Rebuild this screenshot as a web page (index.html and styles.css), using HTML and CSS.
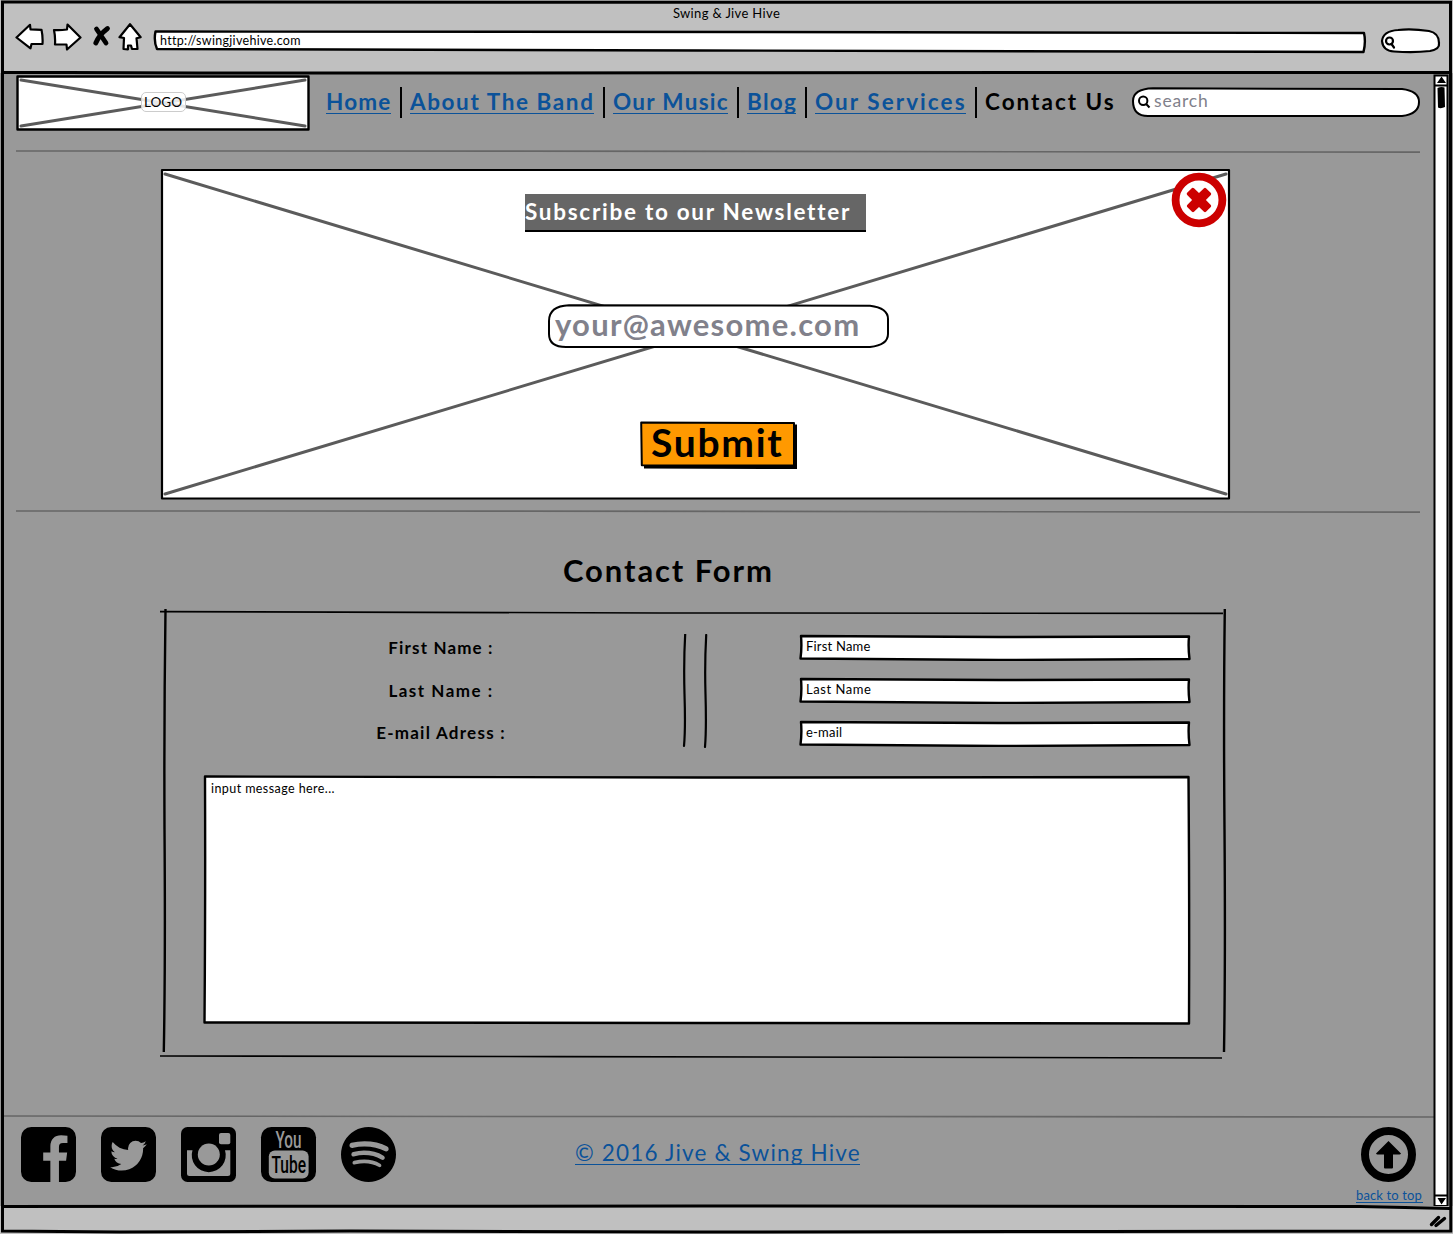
FILE: index.html
```html
<!DOCTYPE html>
<html lang="en">
<head>
<meta charset="utf-8">
<title>Swing &amp; Jive Hive</title>
<link rel="stylesheet" href="styles.css">
</head>
<body>
<div class="window">
  <header class="chrome">
    <div class="title"><span class="t-title">Swing &amp; Jive Hive</span></div>
    <div class="toolbar">
      <svg class="tool back" viewBox="15 22 30 30"><path d="M16.5 37.5L30 24.8 30.5 29.3 41.5 29.8Q43 37 42.5 44L31.5 44 30.5 48.3Z"/></svg>
      <svg class="tool forward" viewBox="52 22 30 30"><path d="M54 30Q60 30.500 67 29.500L67.500 24.500 80.500 37.500 67 49.500 66.500 44.500 55 44.500Q55.500 37 54 30Z"/></svg>
      <svg class="tool stop" viewBox="92 22 20 30"><path d="M96.500 29L106 43M107.500 28.500Q99 35 95.800 43" /></svg>
      <svg class="tool home" viewBox="118 22 24 30"><path d="M130 24.200L119.500 37.200 124 38 123.500 49 128 49.300 128 45.500 131 45.500 132 49 137.500 49 136.500 38.200 140.700 37.200Z"/></svg>
      <div class="url">
        <svg class="sketch" viewBox="153 22 1214 36"><path d="M155.500 31.500L750 32 1364 33Q1366 42 1363.500 52L700 50.500 157 49Q153.500 41 155.500 31.500Z"/></svg>
        <span class="t-url">http://swingjivehive.com</span>
      </div>
      <svg class="tool find" viewBox="1380 22 62 36"><path d="M1382 41Q1383 31 1398 30 1412 28.500 1429 31 1439 33 1439 43 1440 49 1430 51 1414 53 1394 51.500 1383 51 1382 41Z"/><circle cx="1389.500" cy="41" r="3.500"/><path d="M1391.500 44L1394 47.500"/></svg>
    </div>
  </header>

  <div class="viewport">
    <main class="page">
      <div class="masthead">
        <div class="logo">
          <svg class="sketch" viewBox="0 0 294 56"><rect x="1.500" y="1.500" width="291" height="53"/><path class="cross" d="M5 5L289 51M5 51L289 5"/></svg>
          <span class="logo-tag">LOGO</span>
        </div>
        <nav class="menu">
          <a class="m-home">Home</a><i></i>
          <a class="m-about">About The Band</a><i></i>
          <a class="m-music">Our Music</a><i></i>
          <a class="m-blog">Blog</a><i></i>
          <a class="m-services">Our Services</a><i></i>
          <span class="m-contact">Contact Us</span>
        </nav>
        <div class="search">
          <svg class="sketch" viewBox="0 0 288 30"><path d="M1 14Q1 2 21 1.300L270 2Q287 4 287 15 287 27 270 29L16 29Q1 29 1 14Z"/><circle cx="11.200" cy="13.800" r="4.200"/><path d="M14.200 17L17.500 20.500"/></svg>
          <span class="t-search">search</span>
        </div>
      </div>
      <svg class="rule inset" viewBox="0 0 1404 3"><path d="M0 1L500 1.100 1000 1.700 1404 2.100"/></svg>

      <section class="newsletter">
        <svg class="sketch" viewBox="0 0 1071 332"><rect x="2" y="2" width="1067" height="328.500"/><path class="cross" d="M5 6L1066 326M5 326L1066 6"/></svg>
        <svg class="close" viewBox="0 0 56 56"><circle cx="28" cy="28" r="23.400"/><path d="M15.900 21L21 15.900Q22 15.400 23 16.200L28 21 33 16.200Q34 15.400 35 16.200L39.900 21Q40.600 22 39.800 23L34.900 28 39.800 33Q40.600 34 39.800 35L35 39.800Q34 40.600 33 39.800L28 34.900 23 39.800Q22 40.600 21 39.800L16.200 35Q15.400 34 16.200 33L21.100 28 16.200 23Q15.400 22 15.900 21Z"/></svg>
        <h1><span class="t-news">Subscribe to our Newsletter</span></h1>
        <div class="email">
          <svg class="sketch" viewBox="0 0 342 44"><path d="M1 17Q1 2 21 1.200L322 1.800Q340 4 340 15L340 30Q340 41 322 43L18 43Q1 43 1 30Z"/></svg>
          <span class="t-email">your@awesome.com</span>
        </div>
        <div class="submit">
          <svg class="sketch" viewBox="0 0 158 48"><path class="shade" d="M153 3.500L157 3.500 157 48 4 47.500 4 44Z"/><path d="M1.200 1.500L154 2 154 44.500 1.800 44.200Z"/></svg>
          <span class="t-submit">Submit</span>
        </div>
      </section>
      <svg class="rule inset second" viewBox="0 0 1404 3"><path d="M0 1L500 1.100 1000 1.700 1404 2.100"/></svg>

      <h2><span class="t-form">Contact Form</span></h2>

      <section class="form">
        <svg class="sketch lines" viewBox="0 0 1067 450"><path class="thin" d="M0 2.600L500 4 1063 4.400M0 447L400 447.600 1062 449"/><path d="M5.500 0Q4 110 4.500 220 5.500 350 3.800 443M1064.800 0Q1063.500 100 1064.500 220 1065.500 350 1064 443"/></svg>
        <div class="fields">
          <div class="labels"><span class="l-first">First Name :</span><span class="l-last">Last Name :</span><span class="l-mail">E-mail Adress :</span></div>
          <svg class="bars" viewBox="0 0 32 114"><path d="M6.200 0Q4.600 28 5.500 60 6.600 95 5 112M27.200 1Q25.600 30 26.500 60 27.500 95 26 113"/></svg>
          <div class="inputs">
            <div class="input"><svg class="sketch" viewBox="0 0 392 27"><path d="M2 2L200 3 390 2.500Q389 13 390.500 25L200 26 1.500 24.500Q3 13 2 2Z"/></svg><span class="i-first">First Name</span></div>
            <div class="input"><svg class="sketch" viewBox="0 0 392 27"><path d="M2 2L200 3 390 2.500Q389 13 390.500 25L200 26 1.500 24.500Q3 13 2 2Z"/></svg><span class="i-last">Last Name</span></div>
            <div class="input"><svg class="sketch" viewBox="0 0 392 27"><path d="M2 2L200 3 390 2.500Q389 13 390.500 25L200 26 1.500 24.500Q3 13 2 2Z"/></svg><span class="i-mail">e-mail</span></div>
          </div>
        </div>
        <div class="message">
          <svg class="sketch" viewBox="0 0 988 250"><path d="M2 1.500L500 2.500 985.500 2Q986.500 130 986 248.500L500 248 1.500 247.500Q2.500 120 2 1.500Z"/></svg>
          <span class="t-msg">input message here...</span>
        </div>
      </section>

      <svg class="rule full" viewBox="0 0 1433 3"><path d="M0 1L500 1.500 1000 1.600 1433 2"/></svg>
      <footer class="footer">
        <div class="social">
          <svg viewBox="0 128 1536 1536"><path d="M1248 128q119 0 203.500 84.500t84.500 203.500v960q0 119-84.500 203.500t-203.500 84.500h-188v-595h199l30-232h-229v-148q0-56 23.500-84t91.500-28l122-1v-207q-63-9-178-9-136 0-217.500 80t-81.500 226v171h-200v232h200v595h-532q-119 0-203.500-84.500t-84.500-203.500v-960q0-119 84.500-203.500t203.500-84.500h960z"/></svg>
          <svg viewBox="0 128 1536 1536"><path d="M1280 610q-56 25-121 34 68-40 93-117-65 38-134 51-61-66-153-66-87 0-148.500 61.500t-61.500 148.500q0 29 5 48-129-7-242-65t-192-155q-29 50-29 106 0 114 91 175-47-1-100-26v2q0 75 50 133.500t123 72.500q-29 8-51 8-13 0-39-4 21 63 74.500 104t121.500 42q-116 90-261 90-26 0-50-3 148 94 322 94 112 0 210-35.500t168-95 120.500-137 75-162 24.500-168.500q0-18-1-27 63-45 105-109zm256-194v960q0 119-84.500 203.500t-203.500 84.500h-960q-119 0-203.500-84.500t-84.500-203.500v-960q0-119 84.500-203.500t203.500-84.500h960q119 0 203.500 84.500t84.500 203.500z"/></svg>
          <svg viewBox="0 0 55 55"><rect width="55" height="55" rx="6.500"/><path class="cut" d="M6 23.200H11.500A17 17 0 1 0 44 23.200H49.300V46.500Q49.300 49 46.800 49H8.500Q6 49 6 46.500Z"/><circle class="cut" cx="27.800" cy="27.500" r="11"/><rect class="cut" x="38" y="6" width="11.300" height="11.300" rx="2"/></svg>
          <svg class="tube" viewBox="0 0 55 55"><rect width="55" height="55" rx="10.300"/><rect class="cut" x="7.800" y="23.500" width="39.800" height="28" rx="6"/><text class="cut" x="14.500" y="21" font-size="24" textLength="26" lengthAdjust="spacingAndGlyphs">You</text><text x="10.500" y="45.500" font-size="24" textLength="34.500" lengthAdjust="spacingAndGlyphs">Tube</text></svg>
          <svg viewBox="0 128 1536 1536"><path d="M1127 1204q0-32-30-51-193-115-447-115-133 0-287 34-42 9-42 52 0 20 13.500 34.500t35.500 14.500q5 0 37-8 132-27 243-27 226 0 397 103 19 11 33 11 19 0 33-13.500t14-34.500zm96-215q0-40-35-61-237-141-548-141-153 0-303 42-48 13-48 64 0 25 17.500 42.500t42.500 17.500q7 0 37-8 122-33 251-33 279 0 488 124 24 13 38 13 25 0 42.500-17.500t17.500-42.500zm108-248q0-47-40-70-126-73-293-110.500t-343-37.500q-204 0-364 47-23 7-38.500 25.500t-15.500 48.500q0 31 20.500 52t51.500 21q11 0 40-8 133-37 307-37 159 0 309.500 34t253.500 95q21 12 40 12 29 0 50.500-20.500t21.500-51.500zm205 155q0 209-103 385.500t-279.500 279.500-385.500 103-385.500-103-279.500-279.500-103-385.500 103-385.500 279.500-279.500 385.500-103 385.500 103 279.500 279.500 103 385.500z"/></svg>
        </div>
        <a class="copy">© 2016 Jive &amp; Swing Hive</a>
        <div class="top">
          <svg viewBox="0 0 55 55"><circle class="ring" cx="27.500" cy="27.500" r="23.500"/><path d="M27.500 14L40 26.500Q39.500 27.500 38.500 27.500L32 27.500V40.500Q32 41.500 31 41.500H24Q23 41.500 23 40.500V27.500L16.500 27.500Q15.500 27.500 15 26.500Z"/></svg>
          <a>back to top</a>
        </div>
      </footer>
    </main>
    <svg class="scroll" viewBox="1433 73 20 1134"><path class="track" d="M1434.500 75.500L1447.500 75.500 1447.500 1206 1434.500 1206Z"/><path d="M1434 85.500H1448M1434 1195.500H1448" class="line"/><path d="M1437 83L1441.500 76.500 1446 83ZM1437.500 1198L1446 1198 1441.500 1204.500ZM1437.500 88Q1441 86.500 1444.500 87.500L1445 107Q1441 109 1438 107.500Z"/></svg>
  </div>

  <div class="status"><svg viewBox="0 0 18 16"><path d="M2.500 11.500L9.500 4.500M7 12.500L15.500 5.500"/></svg></div>
  <svg class="outline" viewBox="0 0 1453 1234"><path d="M2.500 2L700 2.200 1450.500 2.200Q1451.500 600 1450.800 1231L1100 1231.500 700 1232 350 1231 120 1232 2.500 1231Q1 600 2.500 2ZM2 72.300L200 73 700 72.800 1450 72.300M2 1206.500L700 1206 1360 1206.500 1450 1208.500"/></svg>
</div>
</body>
</html>
```
FILE: styles.css
```css
* { box-sizing: border-box; }
body { margin: 0; font-family: Lato, "Noto Sans", sans-serif; font-variant-ligatures: none; color: #000; background: #fff; }
svg { display: block; }
h1, h2 { margin: 0; }
a, span { white-space: nowrap; }

.window { position: relative; width: 1453px; height: 1234px; display: flex; flex-direction: column; overflow: hidden; }
.outline { position: absolute; inset: 0; width: 1453px; height: 1234px; pointer-events: none; }
.outline path { fill: none; stroke: #000; stroke-width: 3; }
.sketch { position: absolute; left: 0; top: 0; width: 100%; height: 100%; fill: #fff; stroke: #000; stroke-width: 2.4; stroke-linejoin: round; }
.sketch + span, .sketch ~ span { position: relative; }
.cross { stroke: #5b5b5b; stroke-width: 3; fill: none; stroke-linecap: round; }

.chrome { height: 73px; background: #c0c0c0; }
.title { height: 22px; display: flex; justify-content: center; padding-top: 5px; font-size: 13px; line-height: 17px; }
.t-title { letter-spacing: .35px; }
.toolbar { display: flex; height: 36px; padding-left: 15px; }
.tool { fill: #fff; stroke: #000; stroke-width: 2.2; stroke-linejoin: round; stroke-linecap: round; height: 30px; flex: none; }
.back { width: 30px; margin-right: 7px; }
.forward { width: 30px; margin-right: 10px; }
.stop { width: 20px; margin-right: 6px; fill: none; stroke-width: 4.8; }
.home { width: 24px; margin-right: 11px; }
.url { position: relative; width: 1214px; height: 36px; margin-right: 13px; padding: 9px 0 0 7px; font-size: 12.5px; line-height: 19px; }
.t-url { letter-spacing: .3px; }
.find { width: 62px; height: 36px; }

.viewport { height: 1133px; display: flex; background: #999; }
.page { width: 1433px; flex: none; display: flex; flex-direction: column; }
.scroll { width: 20px; height: 1134px; flex: none; }
.track { fill: #fff; stroke: #000; stroke-width: 2; }
.line { stroke: #000; stroke-width: 2; }

.masthead { display: flex; height: 77px; flex: none; padding: 0 0 0 16px; align-items: flex-start; }
.logo { position: relative; width: 294px; height: 56px; margin-top: 2px; display: flex; align-items: center; justify-content: center; }
.logo-tag { border: 1px solid #ccc; border-radius: 5px; background: rgba(255,255,255,.85); width: 45px; height: 20px; font-size: 13.5px; line-height: 19px; text-align: center; margin-top: -3px; }
.menu { display: flex; gap: 9px; margin: 14px 0 0 16px; width: 790px; flex: none; font-size: 22.5px; font-weight: 700; line-height: 30px; }
.menu i { width: 2px; height: 31px; background: #000; flex: none; margin-right: -1px; }
.menu a, .menu span { height: 27px; flex: none; }
.menu a { color: #0b5299; border-bottom: 1px solid #0b5299; }
.m-home { width: 65px; letter-spacing: 1.2px; }
.m-about { width: 184px; letter-spacing: 1.6px; }
.m-music { width: 115px; letter-spacing: 1.3px; }
.m-blog { width: 49px; letter-spacing: 1.3px; }
.m-services { width: 151px; letter-spacing: 2.05px; }
.m-contact { width: 130px; letter-spacing: 2px; }
.search { position: relative; width: 288px; height: 30px; margin: 14px 0 0 16px; padding-left: 22px; font-size: 17.5px; line-height: 27px; color: #81818b; flex: none; }
.search .sketch { stroke-width: 2; }
.t-search { letter-spacing: .8px; }

.rule { height: 3px; flex: none; fill: none; stroke: #666; stroke-width: 1.6; }
.inset { width: 1404px; margin-left: 16px; }

.newsletter { position: relative; width: 1071px; height: 332px; margin: 15px 0 0 160px; display: flex; flex-direction: column; align-items: flex-start; flex: none; }
.newsletter > .sketch { stroke-width: 2.2; }
.newsletter .cross { stroke-width: 3; }
.close { position: absolute; left: 1011px; top: 4px; width: 56px; height: 56px; }
.close circle { fill: #fff; stroke: #c00; stroke-width: 7.8; }
.close path { fill: #c00; }
h1 { position: relative; width: 341px; height: 38px; margin: 26px 0 0 365px; background: #666; border-bottom: 2px solid #000; color: #fff; font-size: 22.5px; line-height: 36px; }
.t-news { letter-spacing: 1.72px; }
.email { position: relative; width: 342px; height: 44px; margin: 72px 0 0 388px; padding-left: 7px; font-size: 31px; font-weight: 700; line-height: 41px; color: #81818b; }
.email .sketch { stroke-width: 2; }
.t-email { letter-spacing: 1.25px; }
.submit { position: relative; width: 158px; height: 48px; margin: 73px 0 0 480px; padding-left: 11px; font-size: 39px; font-weight: 700; line-height: 43px; }
.submit .sketch { fill: #f90; stroke-width: 2; }
.submit .shade { fill: #000; stroke: none; }
.t-submit { letter-spacing: 1.7px; }
.second { margin-top: 10px; }

h2 { margin: 37px 0 0 563px; height: 40px; font-size: 31px; line-height: 40px; flex: none; }
.t-form { letter-spacing: 1.9px; }
.form { position: relative; width: 1067px; height: 450px; margin: 19px 0 0 160px; padding: 25px 0 0 43px; flex: none; }
.lines { fill: none; stroke-width: 2.4; }
.thin { stroke-width: 1.6; }
.fields { position: relative; display: flex; height: 114px; }
.labels { width: 476px; display: flex; flex-direction: column; align-items: center; gap: 15.500px; font-size: 17px; font-weight: 700; line-height: 27px; }
.l-first { letter-spacing: 1.15px; }
.l-last { letter-spacing: 1.5px; }
.l-mail { letter-spacing: 1.25px; }
.bars { width: 32px; height: 114px; fill: none; stroke: #000; stroke-width: 2.2; stroke-linecap: round; }
.inputs { margin-left: 88px; display: flex; flex-direction: column; gap: 16px; }
.input { position: relative; width: 392px; height: 27px; padding-left: 7px; font-size: 13px; line-height: 25px; }
.i-first { letter-spacing: .2px; }
.i-last { letter-spacing: .55px; }
.i-mail { letter-spacing: .2px; }
.message { position: relative; width: 988px; height: 250px; margin-top: 27px; padding: 5px 0 0 8px; font-size: 12.5px; line-height: 18px; }
.t-msg { letter-spacing: .42px; }

.full { width: 1433px; margin: 56px 0 0 3px; }
.footer { display: flex; height: 88px; padding: 9px 0 0 20.5px; flex: none; align-items: flex-start; }
.social { display: flex; gap: 25px; width: 555.5px; }
.social svg { width: 55px; height: 55px; }
.social .tube { overflow: visible; }
.cut { fill: #999; }
.social text { font-family: Roboto, sans-serif; font-weight: 500; }
.copy { width: 285px; height: 38px; margin-left: -1px; padding-top: 11px; color: #0b5299; border-bottom: 1px solid #0b5299; font-size: 22.5px; line-height: 29px; letter-spacing: 1.17px; }
.top { width: 67px; margin-left: 496px; display: flex; flex-direction: column; align-items: center; }
.top svg { width: 55px; height: 55px; margin-right: 3px; }
.ring { fill: none; stroke: #000; stroke-width: 8; }
.top a { width: 67px; height: 19px; margin-top: 2px; color: #0b5299; border-bottom: 1px solid #0b5299; font-size: 13px; line-height: 22px; letter-spacing: .12px; }

.status { height: 28px; background: #c0c0c0; display: flex; justify-content: flex-end; padding: 7px 6px 0 0; }
.status svg { width: 18px; height: 16px; fill: none; stroke: #000; stroke-width: 3.4; stroke-linecap: round; }
```
